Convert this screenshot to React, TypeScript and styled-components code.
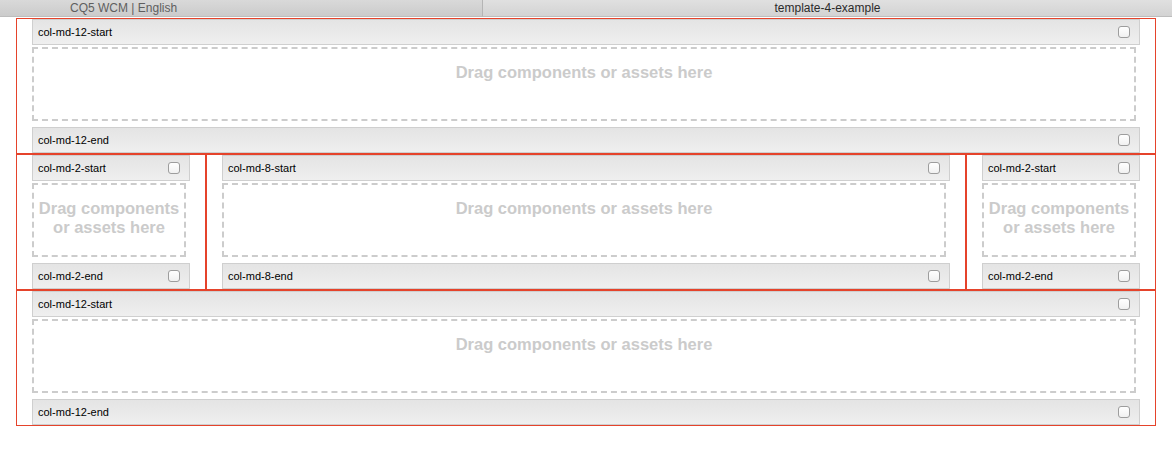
import React from "react";
import styled, { createGlobalStyle } from "styled-components";

const GlobalStyle = createGlobalStyle`
  html, body { margin: 0; padding: 0; background: #ffffff; }
  body { font-family: "Liberation Sans", Arial, sans-serif; }
  * { box-sizing: border-box; }
`;

const TabBar = styled.div`
  display: flex;
  height: 17px;
  width: 1172px;
`;

const Tab = styled.div<{ $w?: number; $active?: boolean }>`
  flex: ${(p) => (p.$w ? `0 0 ${p.$w}px` : "1 1 auto")};
  height: 17px;
  font-size: 12px;
  line-height: 16px;
  color: ${(p) => (p.$active ? "#2b2b2b" : "#5f5f5f")};
  background: ${(p) =>
    p.$active
      ? "linear-gradient(#e0e0e0, #d3d3d3)"
      : "linear-gradient(#d9d9d9, #cbcbcb)"};
  border-bottom: 1px solid #bdbdbd;
  border-right: ${(p) => (p.$active ? "none" : "1px solid #b5b5b5")};
  text-align: ${(p) => (p.$active ? "center" : "left")};
  padding-left: ${(p) => (p.$active ? "0" : "70px")};
  white-space: nowrap;
`;

const Frame = styled.div`
  margin: 1px 0 0 16px;
  width: 1140px;
  display: flex;
  flex-direction: column;
`;

const Row = styled.div`
  display: flex;
  border: 1px solid #e5432b;
`;

const Col = styled.div<{ $w?: number; $left?: boolean; $right?: boolean }>`
  flex: ${(p) => (p.$w ? `0 0 ${p.$w}px` : "1 1 auto")};
  min-width: 0;
  padding: 0 15px;
  display: flex;
  flex-direction: column;
  border-left: ${(p) => (p.$left ? "1px solid #e5432b" : "none")};
  border-right: ${(p) => (p.$right ? "1px solid #e5432b" : "none")};
`;

const EditBar = styled.div`
  height: 26px;
  display: flex;
  align-items: center;
  justify-content: space-between;
  padding: 0 9px 0 5px;
  border: 1px solid #cfcfcf;
  background: linear-gradient(#e4e4e4, #efefef);
  font-size: 11px;
  color: #000;
  white-space: nowrap;
`;

const Check = styled.span`
  width: 12px;
  height: 12px;
  border: 1px solid #9d9d9d;
  border-radius: 3px;
  background: linear-gradient(#ffffff, #f1f1f1);
  flex: 0 0 auto;
`;

const DropZone = styled.div`
  height: 74px;
  margin: 2px 4px 6px 0;
  border: 2px dashed #cccccc;
  padding-top: 14px;
  text-align: center;
  font-size: 16.5px;
  line-height: 19px;
  font-weight: bold;
  color: #cbcbcb;
`;

const Column: React.FC<{ name: string; w?: number; left?: boolean; right?: boolean }> = ({
  name,
  w,
  left,
  right,
}) => (
  <Col $w={w} $left={left} $right={right}>
    <EditBar>
      <span>{name}-start</span>
      <Check />
    </EditBar>
    <DropZone>Drag components or assets here</DropZone>
    <EditBar>
      <span>{name}-end</span>
      <Check />
    </EditBar>
  </Col>
);

export default function App() {
  return (
    <>
      <GlobalStyle />
      <TabBar>
        <Tab $w={483}>CQ5 WCM | English</Tab>
        <Tab $active>template-4-example</Tab>
      </TabBar>
      <Frame>
        <Row>
          <Column name="col-md-12" />
        </Row>
        <Row>
          <Column name="col-md-2" w={189} right />
          <Column name="col-md-8" left right />
          <Column name="col-md-2" w={189} left />
        </Row>
        <Row>
          <Column name="col-md-12" />
        </Row>
      </Frame>
    </>
  );
}
